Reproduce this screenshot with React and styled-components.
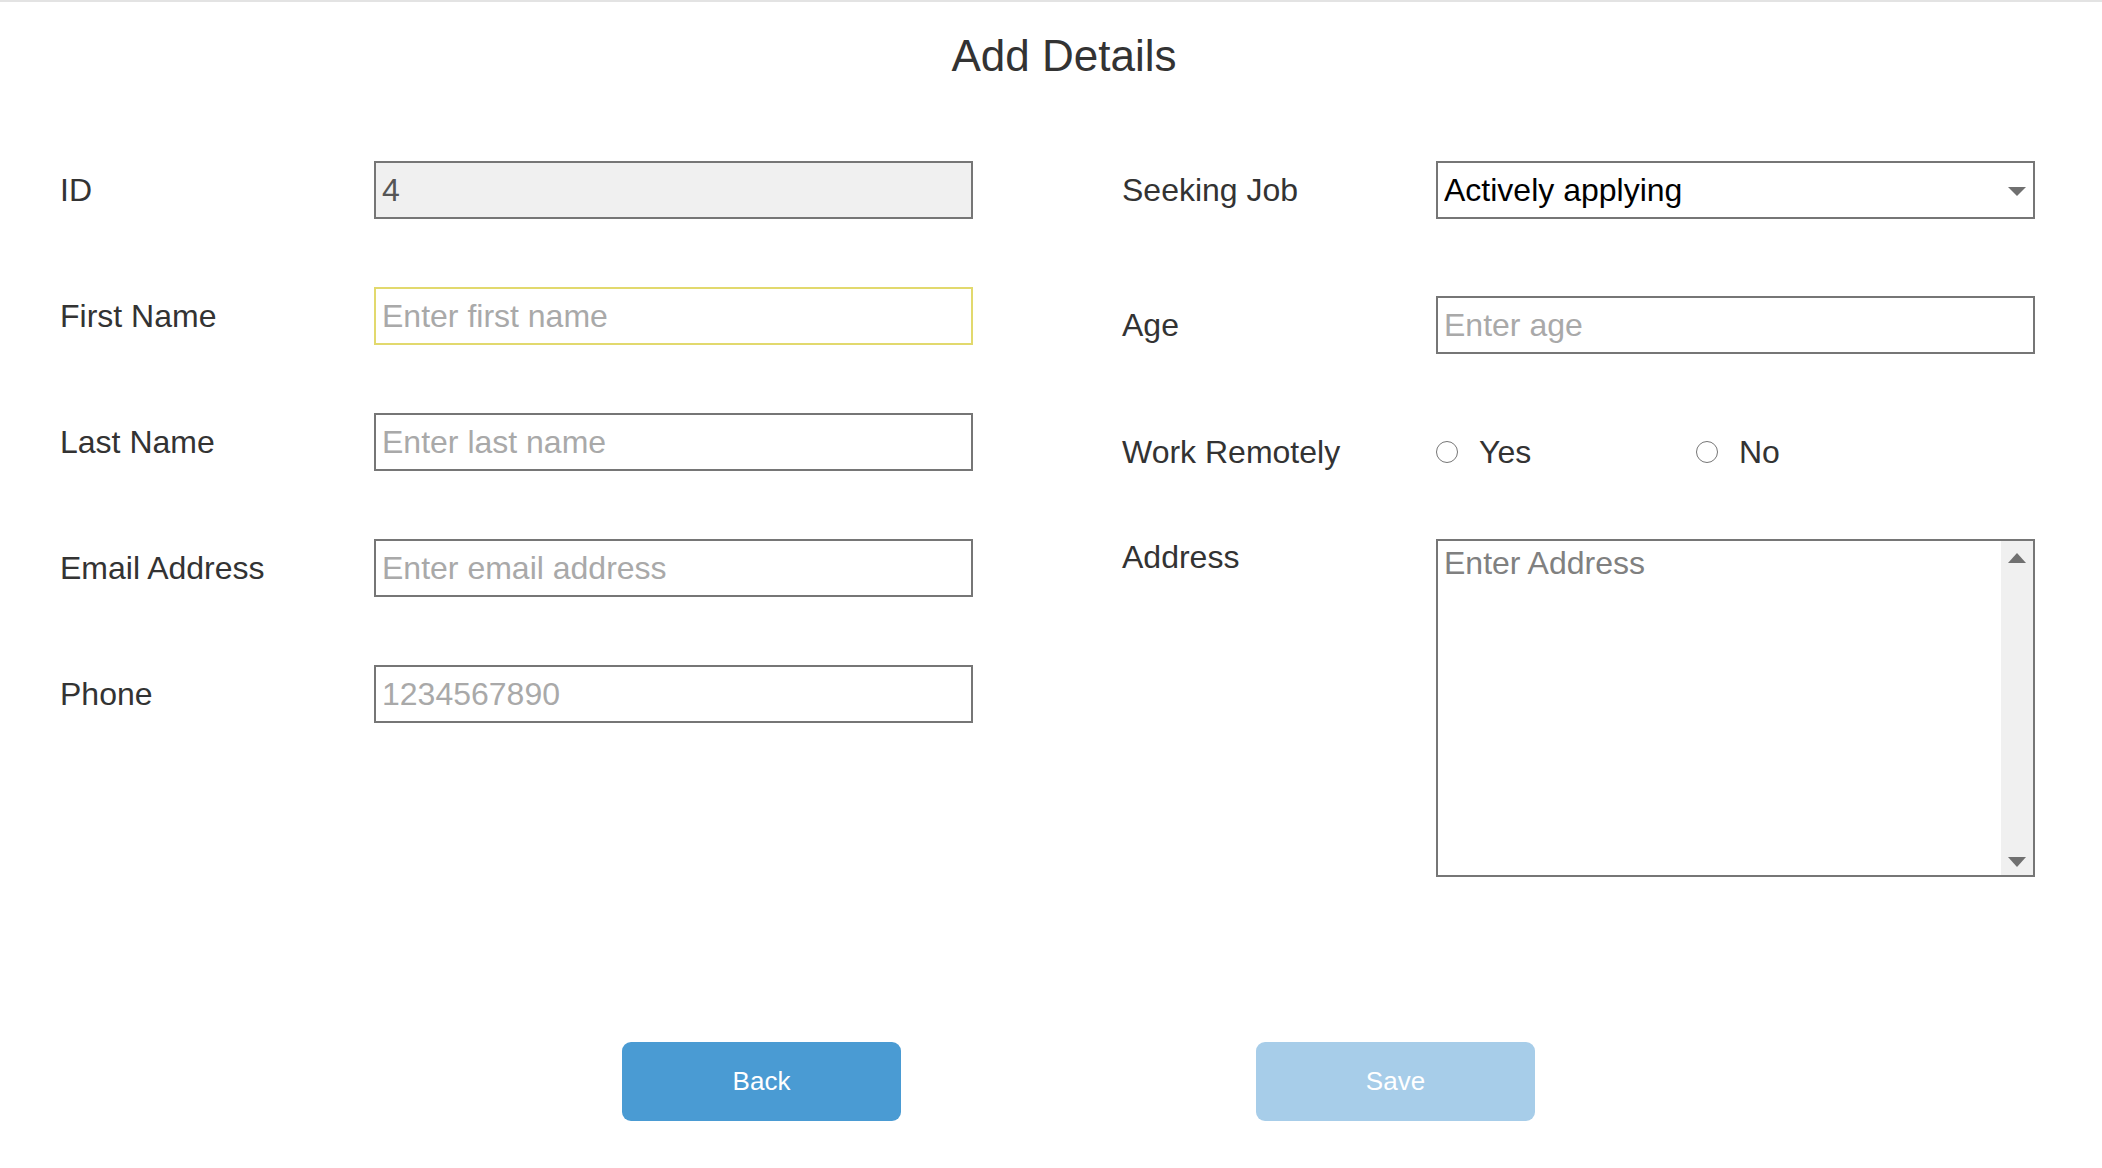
import React from "react";
import styled, { createGlobalStyle } from "styled-components";

const GlobalStyle = createGlobalStyle`
  html, body {
    margin: 0;
    padding: 0;
    background: #ffffff;
  }
  body {
    font-family: "Liberation Sans", Arial, sans-serif;
    color: #333333;
  }
  * {
    box-sizing: border-box;
  }
`;

const leftFields = [
  { label: "ID", value: "4", disabled: true },
  { label: "First Name", placeholder: "Enter first name", focused: true },
  { label: "Last Name", placeholder: "Enter last name" },
  { label: "Email Address", placeholder: "Enter email address" },
  { label: "Phone", placeholder: "1234567890" },
];

const Page = styled.div`
  width: 100%;
  min-height: 1168px;
  border-top: 2px solid #e3e3e3;
`;

const Title = styled.h1`
  margin: 28px 0 0;
  padding-left: 26px;
  text-align: center;
  font-size: 44px;
  line-height: 51px;
  font-weight: 400;
  color: #333333;
`;

const Form = styled.form`
  display: flex;
  gap: 149px;
  margin-top: 80px;
  padding: 0 67px 0 60px;
`;

const Column = styled.div`
  width: 913px;
  display: flex;
  flex-direction: column;
  gap: ${(p) => p.$gap || 0}px;
`;

const Field = styled.div`
  display: grid;
  grid-template-columns: 314px 599px;
  align-items: ${(p) => (p.$top ? "start" : "center")};
  margin-top: ${(p) => p.$offset || 0}px;
`;

const Label = styled.label`
  font-size: 32px;
  line-height: 37px;
  color: #333333;
`;

const TextInput = styled.input`
  width: 100%;
  height: 58px;
  margin: 0;
  padding: 0 6px;
  border: 2px solid ${(p) => (p.$focused ? "#e2d96d" : "#767676")};
  border-radius: 0;
  outline: none;
  background: ${(p) => (p.disabled ? "#f0f0f0" : "#ffffff")};
  font-family: inherit;
  font-size: 32px;
  color: ${(p) => (p.disabled ? "#555555" : "#000000")};
  &::placeholder {
    color: #a9a9a9;
  }
`;

const SelectWrap = styled.div`
  position: relative;
  width: 100%;
`;

const Select = styled.select`
  width: 100%;
  height: 58px;
  margin: 0;
  padding: 0 6px;
  border: 2px solid #767676;
  border-radius: 0;
  outline: none;
  background: #ffffff;
  appearance: none;
  -webkit-appearance: none;
  font-family: inherit;
  font-size: 32px;
  color: #000000;
`;

const SelectArrow = styled.svg`
  position: absolute;
  right: 9px;
  top: 26px;
  pointer-events: none;
`;

const RadioGroup = styled.div`
  display: flex;
  align-items: center;
  height: 58px;
`;

const RadioOption = styled.label`
  display: flex;
  align-items: center;
  gap: 21px;
  width: 260px;
  font-size: 32px;
  color: #333333;
`;

const Radio = styled.input`
  appearance: none;
  -webkit-appearance: none;
  width: 22px;
  height: 22px;
  margin: 0;
  border: 1.5px solid #767676;
  border-radius: 50%;
  background: #ffffff;
`;

const AreaBox = styled.div`
  display: flex;
  height: 338px;
  border: 2px solid #767676;
  background: #ffffff;
`;

const TextArea = styled.textarea`
  flex: 1;
  border: none;
  outline: none;
  resize: none;
  margin: 0;
  padding: 4px 6px;
  font-family: inherit;
  font-size: 32px;
  color: #000000;
  &::placeholder {
    color: #808080;
  }
`;

const ScrollTrack = styled.div`
  width: 32px;
  background: #f0f0f0;
  display: flex;
  flex-direction: column;
  justify-content: space-between;
  align-items: center;
  padding: 12px 0 8px;
`;

const ButtonRow = styled.div`
  display: flex;
  justify-content: center;
  gap: 355px;
  margin-top: 165px;
  padding-left: 55px;
`;

const Button = styled.button`
  width: 279px;
  height: 79px;
  border: none;
  border-radius: 9px;
  background: ${(p) => (p.$muted ? "#a7cde9" : "#4a9bd3")};
  color: #ffffff;
  font-family: inherit;
  font-size: 26px;
  cursor: pointer;
`;

const Triangle = ({ up }) => (
  <svg width="18" height="10" viewBox="0 0 18 10">
    <path d={up ? "M0 10 L9 0 L18 10 Z" : "M0 0 L18 0 L9 10 Z"} fill="#707070" />
  </svg>
);

export default function App() {
  return (
    <>
      <GlobalStyle />
      <Page>
        <Title>Add Details</Title>
        <Form onSubmit={(e) => e.preventDefault()}>
          <Column $gap={68}>
            {leftFields.map((f) => (
              <Field key={f.label}>
                <Label>{f.label}</Label>
                <TextInput
                  defaultValue={f.value}
                  placeholder={f.placeholder}
                  disabled={f.disabled}
                  $focused={f.focused}
                />
              </Field>
            ))}
          </Column>
          <Column>
            <Field>
              <Label>Seeking Job</Label>
              <SelectWrap>
                <Select defaultValue="active">
                  <option value="active">Actively applying</option>
                  <option value="open">Open to offers</option>
                  <option value="no">Not looking</option>
                </Select>
                <SelectArrow width="18" height="9" viewBox="0 0 18 9">
                  <path d="M0 0 L18 0 L9 9 Z" fill="#707070" />
                </SelectArrow>
              </SelectWrap>
            </Field>
            <Field $offset={77}>
              <Label>Age</Label>
              <TextInput placeholder="Enter age" />
            </Field>
            <Field $offset={69}>
              <Label>Work Remotely</Label>
              <RadioGroup>
                <RadioOption>
                  <Radio type="radio" name="remote" value="yes" />
                  Yes
                </RadioOption>
                <RadioOption>
                  <Radio type="radio" name="remote" value="no" />
                  No
                </RadioOption>
              </RadioGroup>
            </Field>
            <Field $offset={58} $top>
              <Label>Address</Label>
              <AreaBox>
                <TextArea placeholder="Enter Address" />
                <ScrollTrack>
                  <Triangle up />
                  <Triangle />
                </ScrollTrack>
              </AreaBox>
            </Field>
          </Column>
        </Form>
        <ButtonRow>
          <Button type="button">Back</Button>
          <Button type="button" $muted>
            Save
          </Button>
        </ButtonRow>
      </Page>
    </>
  );
}
